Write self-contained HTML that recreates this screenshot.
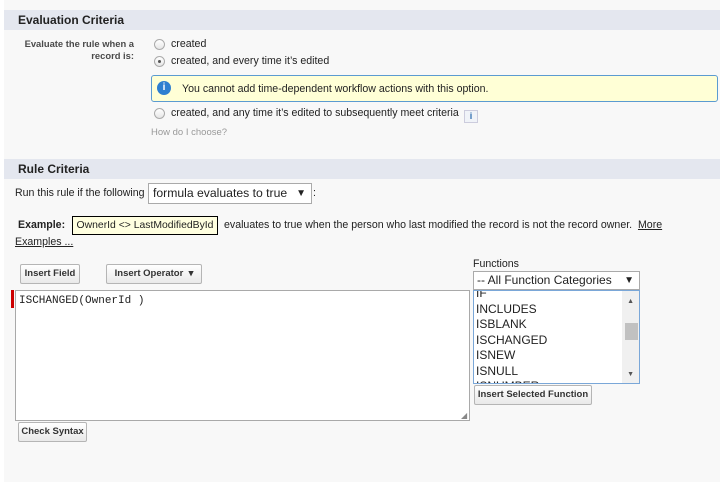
<!DOCTYPE html>
<html><head><style>
body{margin:0;width:720px;height:482px;background:#fff;font-family:"Liberation Sans",Arial,sans-serif;position:relative;overflow:hidden;color:#222}
.pg{position:absolute;left:4px;top:0;right:0;bottom:0;background:#f8f8f8}
.a{position:absolute;white-space:nowrap}
.hd{position:absolute;left:4px;right:0;height:20px;background:#e4e7ef;font-weight:bold;font-size:12px;color:#222}
.hd span{position:absolute;left:14px;top:3px}
.rad{position:absolute;width:9px;height:9px;border:1px solid #aaa;border-radius:50%;background:linear-gradient(#fff,#e6e6e6)}
.btn{position:absolute;height:18px;border:1px solid #b5b5b5;border-radius:2px;background:linear-gradient(#fff,#e9e9e9);font-size:9.5px;font-weight:bold;color:#333;line-height:18px;text-align:center;white-space:nowrap}
.t{font-size:10.6px}
</style></head><body>
<div class="pg"></div>
<div class="hd" style="top:10px"><span>Evaluation Criteria</span></div>
<div class="a" style="left:10px;top:38px;width:124px;text-align:right;font-size:9.4px;font-weight:bold;color:#4a4a4a;line-height:12px;white-space:normal">Evaluate the rule when a record is:</div>
<div class="rad" style="left:154px;top:39px"></div>
<div class="a t" style="left:171px;top:38px">created</div>
<div class="rad" style="left:154px;top:56px"><div style="position:absolute;left:3px;top:3px;width:3px;height:3px;border-radius:50%;background:#555"></div></div>
<div class="a t" style="left:171px;top:55px">created, and every time it’s edited</div>
<div class="a" style="left:151px;top:75px;width:565px;height:25px;background:#ffffd6;border:1px solid #5b9bd1;border-radius:3px"></div>
<div class="a" style="left:157px;top:81px;width:14px;height:14px;border-radius:50%;background:#2f7fd0;color:#fff;font-size:10px;font-weight:bold;text-align:center;line-height:14px">i</div>
<div class="a t" style="left:182px;top:83px">You cannot add time-dependent workflow actions with this option.</div>
<div class="rad" style="left:154px;top:108px"></div>
<div class="a t" style="left:171px;top:107px">created, and any time it’s edited to subsequently meet criteria</div>
<div class="a" style="left:464px;top:110px;width:12px;height:11px;border:1px solid #ccd;background:#f0f3f8;font-size:9px;font-weight:bold;color:#2f6fb0;text-align:center;line-height:11px">i</div>
<div class="a" style="left:151px;top:127px;font-size:9.5px;color:#999">How do I choose?</div>

<div class="hd" style="top:159px"><span>Rule Criteria</span></div>
<div class="a t" style="left:15px;top:187px">Run this rule if the following</div>
<div class="a" style="left:148px;top:183px;width:162px;height:19px;border:1px solid #aaa;background:#fff;font-size:12.2px;line-height:19px"><span style="margin-left:4px">formula evaluates to true</span><span style="position:absolute;right:5px;font-size:10px">▼</span></div>
<div class="a t" style="left:313px;top:187px">:</div>
<div class="a t" style="left:18px;top:219px;font-weight:bold">Example:</div>
<div class="a" style="left:72px;top:216px;width:144px;height:17px;border:1px solid #000;background:#ffffe0;font-size:10.4px;line-height:17px;text-align:center">OwnerId &lt;&gt; LastModifiedById</div>
<div class="a t" style="left:224px;top:219px">evaluates to true when the person who last modified the record is not the record owner.&nbsp;&nbsp;<u>More</u></div>
<div class="a t" style="left:15px;top:236px"><u>Examples ...</u></div>

<div class="btn" style="left:20px;top:264px;width:58px">Insert Field</div>
<div class="btn" style="left:106px;top:264px;width:94px">Insert Operator &nbsp;▾</div>
<div class="a" style="left:11px;top:290px;width:3px;height:18px;background:#c00"></div>
<div class="a" style="left:15px;top:290px;width:453px;height:129px;border:1px solid #a9a9a9;background:#fff"></div>
<div class="a" style="left:19px;top:295px;font-family:'Liberation Mono',monospace;font-size:11px">ISCHANGED(OwnerId )</div>
<div class="a" style="left:461px;top:411px;font-size:8px;color:#888">◢</div>

<div class="a t" style="left:473px;top:258px">Functions</div>
<div class="a" style="left:473px;top:271px;width:165px;height:17px;border:1px solid #aaa;background:#fff;font-size:12px;line-height:17px"><span style="margin-left:3px">-- All Function Categories</span><span style="position:absolute;right:5px;font-size:10px">▼</span></div>
<div class="a" style="left:473px;top:290px;width:165px;height:92px;border:1px solid #7aa7d8;background:#fff;overflow:hidden;font-size:12px;line-height:15.5px">
<div style="position:absolute;left:2px;top:-5px">IF<br>INCLUDES<br>ISBLANK<br>ISCHANGED<br>ISNEW<br>ISNULL<br>ISNUMBER</div>
<div style="position:absolute;right:0;top:0;width:17px;height:92px;background:#f0f0f0"></div>
<div style="position:absolute;right:5px;top:3px;font-size:7px;color:#555">▲</div>
<div style="position:absolute;right:1px;top:32px;width:13px;height:17px;background:#c1c1c1"></div>
<div style="position:absolute;right:5px;top:76px;font-size:7px;color:#555">▼</div>
</div>
<div class="btn" style="left:474px;top:385px;width:116px">Insert Selected Function</div>
<div class="btn" style="left:18px;top:422px;width:67px">Check Syntax</div>
</body></html>
